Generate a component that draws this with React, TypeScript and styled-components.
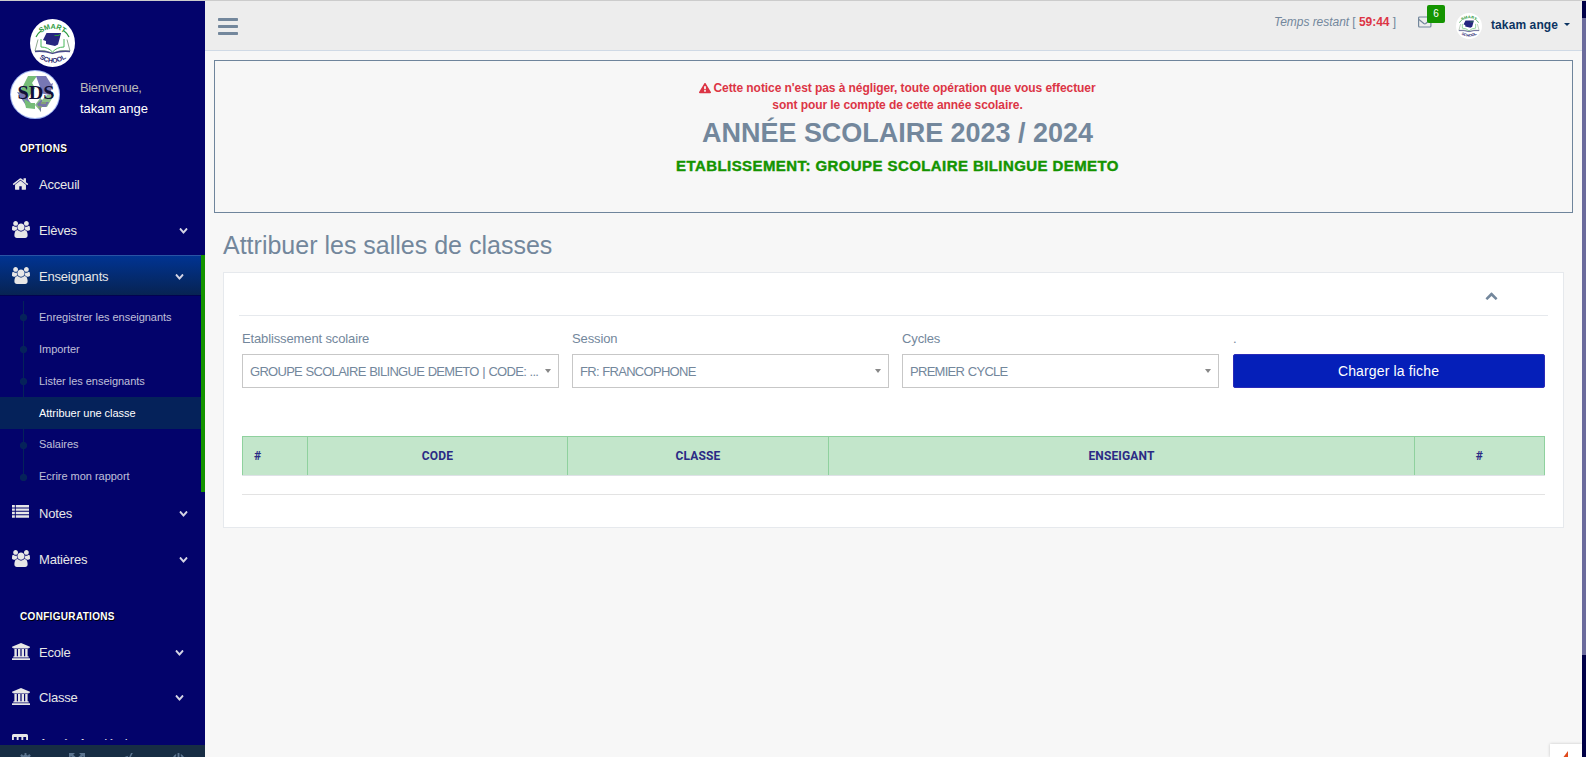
import React from "react";
import styled, { createGlobalStyle } from "styled-components";

const Global = createGlobalStyle`
  *, *::before, *::after { box-sizing: border-box; }
  body { margin: 0; background: #f7f7f7; overflow: hidden; }
  body, button { font-family: "Liberation Sans", Arial, sans-serif; }
`;

const PATHS = {
  home: ["0 0 1792 1792", "M1472 992v480q0 26-19 45t-45 19h-384v-384h-256v384h-384q-26 0-45-19t-19-45v-480q0-1 .5-3t.5-3l575-474 575 474q1 2 1 6zm223-69l-62 74q-8 9-21 11h-3q-13 0-21-7l-692-577-692 577q-12 8-24 7-13-2-21-11l-62-74q-8-10-7-23.5t11-21.5l719-599q32-26 76-26t76 26l244 204v-195q0-14 9-23t23-9h192q14 0 23 9t9 23v408l219 182q10 8 11 21.5t-7 23.5z"],
  users: ["-64 0 1920 1792", "M529 896q-162 5-265 128h-134q-82 0-138-40.5t-56-118.5q0-353 124-353 6 0 43.5 21t97.5 42.5 119 21.5q67 0 133-23-5 37-5 66 0 139 81 256zm1071 637q0 120-73 189.5t-194 69.5h-874q-121 0-194-69.5t-73-189.5q0-53 3.5-103.5t14-109 26.5-108.5 43-97.5 62-81 85.5-53.5 111.5-20q10 0 43 21.5t73 48 107 48 135 21.5 135-21.5 107-48 73-48 43-21.5q61 0 111.5 20t85.5 53.5 62 81 43 97.5 26.5 108.5 14 109 3.5 103.5zm-1024-1277q0 106-75 181t-181 75-181-75-75-181 75-181 181-75 181 75 75 181zm704 384q0 159-112.5 271.5t-271.5 112.5-271.5-112.5-112.5-271.5 112.5-271.5 271.5-112.5 271.5 112.5 112.5 271.5zm576 225q0 78-56 118.5t-138 40.5h-134q-103-123-265-128 81-117 81-256 0-29-5-66 66 23 133 23 59 0 119-21.5t97.5-42.5 43.5-21q124 0 124 353zm-128-609q0 106-75 181t-181 75-181-75-75-181 75-181 181-75 181 75 75 181z"],
  bank: ["0 0 1920 1792", "M960 0l960 384v128h-128q0 26-20.5 45t-48.5 19h-1526q-28 0-48.5-19t-20.5-45h-128v-128zm-704 640h256v768h128v-768h256v768h128v-768h256v768h128v-768h256v768h59q28 0 48.5 19t20.5 45v64h-1664v-64q0-26 20.5-45t48.5-19h59v-768zm1595 960q28 0 48.5 19t20.5 45v128h-1920v-128q0-26 20.5-45t48.5-19h1782z"],
  list: ["0 0 18 14", "M0 0h3v2.6H0zM4 0h14v2.6H4zM0 3.7h3v2.6H0zM4 3.7h14v2.6H4zM0 7.4h3V10H0zM4 7.4h14V10H4zM0 11.1h3v2.6H0zM4 11.1h14v2.6H4z"],
  table: ["0 0 17 16", "M1.5 0h14Q17 0 17 1.5v13q0 1.5-1.5 1.5h-14Q0 16 0 14.500v-13Q0 0 1.500 0zM2 3v3h3V3zm5 0v3h3V3zm5 0v3h3V3zM2 8v2h3V8zm5 0v2h3V8zm5 0v2h3V8z"],
  down: ["0 0 1792 1792", "M1683 808l-742 741q-19 19-45 19t-45-19l-742-741q-19-19-19-45.500t19-45.500l166-165q19-19 45-19t45 19l531 531 531-531q19-19 45-19t45 19l166 165q19 19 19 45.500t-19 45.500z"],
  up: ["0 0 1792 1792", "M1683 1331l-166 165q-19 19-45 19t-45-19l-531-531-531 531q-19 19-45 19t-45-19l-166-165q-19-19-19-45.500t19-45.500l742-741q19-19 45-19t45 19l742 741q19 19 19 45.500t-19 45.500z"],
  warning: ["0 0 1792 1792", "M1024 1375v-190q0-14-9.500-23.500t-22.500-9.500h-192q-13 0-22.500 9.500t-9.500 23.500v190q0 14 9.500 23.500t22.500 9.500h192q13 0 22.500-9.500t9.500-23.500zm-2-374l18-459q0-12-10-19-13-11-24-11h-220q-11 0-24 11-10 7-10 21l17 457q0 10 10 16.500t24 6.500h185q14 0 23.500-6.500t10.500-16.500zm-14-934l768 1408q35 63-2 126-17 29-46.500 46t-63.500 17h-1536q-34 0-63.500-17t-46.500-46q-37-63-2-126l768-1408q17-31 47-49t65-18 65 18 47 49z"],
  bars: ["0 0 20 17", "M.8 0h18.400q.8 0 .8.800v1.400q0 .8-.8.800H.8Q0 3 0 2.200V.8Q0 0 .8 0zM.8 7h18.400q.8 0 .8.800v1.400q0 .8-.8.800H.8Q0 10 0 9.200V7.800Q0 7 .8 7zM.8 14h18.400q.8 0 .8.800v1.400q0 .8-.8.800H.8Q0 17 0 16.200v-1.400q0-.8.8-.8z"],
  cog: ["0 0 14 14", "M6 0h2v2l1.500.6L11 1.200 12.800 3l-1.400 1.500L12 6h2v2h-2l-.6 1.500L12.800 11 11 12.800l-1.500-1.400L8 12v2H6v-2l-1.500-.6L3 12.800 1.200 11l1.400-1.500L2 8H0V6h2l.6-1.500L1.200 3 3 1.200l1.500 1.400L6 2zM7 4.500a2.500 2.500 0 100 5 2.500 2.500 0 000-5z"],
  full: ["0 0 16 14", "M0 0h6L4.200 1.700 7 4.300 5.300 6 2.100 3.200 0 5zM10 0h6v5l-2.100-1.800L10.700 6 9 4.300l2.800-2.600zM0 14V9l2.100 1.800L5.300 8 7 9.700l-2.800 2.600L6 14zM16 14h-6l1.800-1.700L9 9.700 10.700 8l3.200 2.800L16 9z"],
  eye: ["0 0 16 14", "M11.500 0h2L6 14H4.500zM0 8Q3 3.500 8.500 3L7.200 5Q5 6 6 9l-1 2Q1.500 10 0 8zM12.500 4Q15 5.500 16 8q-2.500 3-7 3.500l2.500-4.500z"],
  off: ["0 0 14 14", "M6 0h2v7H6zM4.500 1.200v2.300a4.500 4.500 0 105 0V1.200a6.500 6.500 0 11-5 0z"],
} as const;
type IconName = keyof typeof PATHS;

const Svg = styled.svg<{ $w: number; $h: number }>`
  display: block; flex: none; width: ${p => p.$w}px; height: ${p => p.$h}px; fill: currentColor;
`;
const Icon = ({ name, w, h }: { name: IconName; w: number; h: number }) => (
  <Svg $w={w} $h={h} viewBox={PATHS[name][0]} preserveAspectRatio="none" aria-hidden><path fillRule={name === "table" || name === "cog" ? "evenodd" : undefined} d={PATHS[name][1]} /></Svg>
);

const Page = styled.div`
  position: relative; display: flex; width: 1586px; height: 757px; overflow: hidden;
  border-top: 1px solid #ccc; background: #f7f7f7; color: #73879c; font-size: 13px;
`;
const Sidebar = styled.aside`
  display: flex; flex-direction: column; flex: none; width: 205px; height: 756px; background: #03036b; color: #e7e7e7;
`;
const Brand = styled.div`padding: 18px 0 0 30px; height: 68px;`;
const Profile = styled.div`display: flex; padding: 1px 0 0 10px; height: 66px;`;
const Welcome = styled.div`
  padding: 10px 0 0 20px; line-height: 16px; letter-spacing: -0.35px;
  span { display: block; color: #bab8b8; }
  strong { display: block; margin-top: 5px; font-weight: 400; color: #fff; letter-spacing: 0; }
`;
const SectionTitle = styled.h3<{ $top: number }>`
  margin: ${p => p.$top}px 0 0; padding-left: 20px; height: 16px; line-height: 16px;
  font-size: 10px; letter-spacing: 0.32px; color: #fff; text-shadow: 1px 1px #000;
`;
const Menu = styled.nav<{ $top: number; $gap: number }>`
  display: flex; flex-direction: column; gap: ${p => p.$gap}px; margin-top: ${p => p.$top}px;
`;
const MenuRow = styled.div<{ $active?: boolean; $end: number }>`
  display: flex; align-items: center; height: 40px; padding: 0 ${p => p.$end}px 0 12px; letter-spacing: -0.2px;
  background: ${p => (p.$active ? "linear-gradient(#003494, #072352)" : "none")};
  box-shadow: ${p => (p.$active ? "inset 0 1px 0 rgba(255,255,255,.16), 0 1px 0 rgba(0,0,0,.25)" : "none")};
`;
const Glyph = styled.span<{ $low?: boolean }>`width: 27px; height: ${p => (p.$low ? 15 : 17)}px;`;
const RowText = styled.span`flex: 1; padding-top: 2px; white-space: nowrap;`;
const Chevron = styled.span`padding-top: 1px; color: #d4d4e4;`;
const Group = styled.div`border-right: 4px solid #149400; height: 237px;`;
const SubMenu = styled.ul`list-style: none; margin: 6px 0 0; padding: 0;`;
const SubItem = styled.li<{ $on?: boolean; $last?: boolean; $raised?: boolean }>`
  display: flex; align-items: center; height: 32px; font-size: 11px; letter-spacing: -0.03px;
  color: ${p => (p.$on ? "#fff" : "rgba(255,255,255,.75)")};
  background: ${p => (p.$on ? "#05225a" : "none")};
  span { padding-bottom: ${p => (p.$raised ? "2px" : "0")}; }
  &::before {
    content: ""; flex: none; width: 39px; height: 32px;
    background:
      radial-gradient(circle at 23.500px 16.500px, #05225a 3.300px, transparent 3.900px),
      linear-gradient(#05225a, #05225a) 23px 0 / 1px ${p => (p.$last ? "17px" : "32px")} no-repeat;
  }
`;
const Clip = styled.div`height: 18px; overflow: hidden; margin-top: 6px;`;
const Footer = styled.div`
  display: grid; grid-template-columns: repeat(4, 51px); justify-items: center;
  margin-top: auto; height: 12px; padding-top: 8px; overflow: hidden; background: #172d44; color: #5a738e;
`;

const Main = styled.main`flex: none; width: 1377px;`;
const TopNav = styled.header`
  display: flex; height: 50px; padding-left: 13px; background: #ededed; border-bottom: 1px solid #d0dae6; color: #73879c;
`;
const Toggle = styled.div`padding-top: 17px; flex: 1;`;
const Timer = styled.div`
  padding-top: 13px; width: 144px; font-size: 12px; line-height: 16px; white-space: nowrap; letter-spacing: -0.04px;
  b { color: #dc3545; }
`;
const Mail = styled.div`position: relative; width: 38px; padding-top: 15px;`;
const Badge = styled.span`
  position: absolute; left: 9px; top: 4px; width: 18px; height: 18px; border-radius: 2px;
  background: #149400; color: #fff; font-size: 10px; line-height: 18px; text-align: center;
`;
const User = styled.div`
  display: flex; width: 126px; padding-top: 12px; font-size: 12px; font-weight: 700; color: #0c3462;
  span { padding: 5px 0 0 9px; letter-spacing: 0.1px; }
  &::after { content: ""; height: 0; margin: 10px 0 0 6px; border: 3px solid transparent; border-top-color: #0c3462; border-bottom: 0; }
`;
const Notice = styled.section`
  margin: 9px 9px 0 9px; height: 153px; border: 1px solid #6f859c; padding: 19px 0 0 8px; text-align: center;
`;
const Alert = styled.p`
  margin: 0; color: #dc3545; font-size: 12px; font-weight: 700; line-height: 17px; letter-spacing: -0.07px;
  span { display: flex; justify-content: center; align-items: center; gap: 2px; }
`;
const Year = styled.h1`margin: 3px 0 0; font-size: 27px; line-height: 32px; letter-spacing: -0.03px;`;
const School = styled.h2`
  margin: 9px 0 0; font-size: 14px; line-height: 16px; letter-spacing: 0.4px; color: #149400; -webkit-text-stroke: 0.4px #149400; transform: scaleX(1.07);
`;
const Title = styled.h3`margin: 18px 0 0 18px; font-size: 25px; line-height: 28px; font-weight: 400;`;
const Panel = styled.section`
  margin: 13px 18px 0; height: 256px; padding: 0 15px; background: #fff; border: 1px solid #e6e9ed;
`;
const PanelHead = styled.div`
  display: flex; justify-content: flex-end; height: 43px; padding: 16px 50px 0 0; border-bottom: 1px solid #e6e9ed;
`;
const Form = styled.div`
  display: grid; grid-template-columns: 317px 317px 317px 312px; column-gap: 13px; padding: 15px 3px 0;
`;
const Field = styled.label`display: block; letter-spacing: -0.13px; line-height: 16px; &:last-child { padding-left: 1px; width: 313px; }`;
const Select = styled.div`
  display: flex; align-items: center; justify-content: space-between; margin-top: 7px; height: 34px; padding: 1px 7px 0 7px;
  border: 1px solid #c7c7c7; letter-spacing: -0.71px; font-size: 13px; white-space: nowrap; word-spacing: .6px;
  &::after { content: ""; border: 3px solid transparent; border-top: 4px solid #888; border-bottom: 0; margin-bottom: 2px; }
`;
const Button = styled.button`
  display: block; width: 312px; height: 34px; margin-top: 7px; padding: 0 7px 0 6px; border: 1px solid #2a2ab8; border-radius: 2px;
  background: #051fb9; color: #fff; font-size: 14px; letter-spacing: 0.15px;
`;
const Table = styled.table`
  width: 1302px; margin: 48px 3px 0; border-collapse: collapse; table-layout: fixed;
`;
const Th = styled.th<{ $w: number; $left?: boolean }>`
  width: ${p => p.$w}px; height: 39px; padding: 0 11px; border: 1px solid #8fd19e; border-bottom-color: #dee2e6; background: #c3e6cb;
  color: #2b2b85; font: 700 12px/16px Roboto, sans-serif; letter-spacing: 0.15px; text-align: ${p => (p.$left ? "left" : "center")};
`;
const Rule = styled.div`margin: 18px 3px 0; border-top: 1px solid #e3e3e3;`;
const ScrollTrack = styled.div`flex: none; width: 4px; height: 756px; padding-top: 17px; background: #000048;`;
const ScrollThumb = styled.div`height: 637px; background: #6b6b9c;`;
const Widget = styled.div`
  position: absolute; right: 4px; bottom: 0; display: flex; justify-content: center; width: 32px; height: 13px;
  padding-top: 7px; overflow: hidden; background: #fff; box-shadow: 0 0 3px rgba(0,0,0,.2);
`;

const SmartLogo = ({ w, h, id }: { w: number; h: number; id: string }) => (
  <svg width={w} height={h} viewBox="0 0 45 48" preserveAspectRatio="none">
    <defs>
      <path id={id + "Top"} d="M8 16.500Q22.500 3 37 16.500" />
      <path id={id + "Bot"} d="M7 37.500Q22.500 50 38.500 37.500" />
    </defs>
    <ellipse cx="22.500" cy="24" rx="22.500" ry="24" fill="#fff" />
    <text fontSize="7.200" fontWeight="700" fill="#2c9a3e" textAnchor="middle"><textPath href={"#" + id + "Top"} startOffset="50%">SMART</textPath></text>
    <path d="M6 18Q8 14 11.500 11.500M39 18Q37 14 33.500 11.500" stroke="#2c9a3e" strokeWidth="1.200" fill="none" />
    <path d="M8 20.500L5 32q9-2 17.500 2 8.500-4 17.500-2l-3-11.500" stroke="#8fa98f" strokeWidth="1" fill="none" />
    <path d="M11 20v8q7 0 11.500 5Q27 28 34 28v-8" stroke="#49b85a" strokeWidth="1" fill="none" />
    <path d="M5 32.500q9-1 17.500 2 8.500-3 17.500-2" stroke="#4a4a8c" strokeWidth="1.300" fill="none" />
    <path d="M16.500 14H31l-1.500 6-1.500 5.500-3 1.500-9-2v-3l-3-1z" fill="#262680" />
    <path d="M24.500 16.500h4.500l.5-1.500" stroke="#2c9a3e" strokeWidth="1" fill="none" />
    <text fontSize="6.800" fontWeight="700" fill="#262670" textAnchor="middle"><textPath href={"#" + id + "Bot"} startOffset="50%">SCHOOL</textPath></text>
  </svg>
);
const SdsLogo = () => (
  <svg width="50" height="49" viewBox="0 0 50 49">
    <ellipse cx="25" cy="24.500" rx="25" ry="24.500" fill="#9fb4f0" />
    <ellipse cx="25" cy="24.500" rx="24" ry="23.600" fill="#fff" />
    <path d="M18 6h9l-5 7 3 5-7 10-10-4 5-8z" fill="#76bd78" />
    <path d="M26 6h10l5 8 2-1-3 12-11-2 2-3z" fill="#7777b4" />
    <path d="M7 22l11 2v5l4 6 3 3-8-1z" fill="#7777b4" />
    <path d="M14 29l7 4h4v6l-9-1z" fill="#76bd78" />
    <path d="M44 25l-7 12h-6v5l-6-7 6-8v4l6-6z" fill="#8cbf8a" />
    <path d="M27 34l5-5v3h7l-3 5h-5v5z" fill="#7777a8" />
    <path d="M31 33h5M28 37h4" stroke="#93c34b" />
    <text x="26" y="29" textAnchor="middle" textLength="37" lengthAdjust="spacingAndGlyphs" fontFamily="Liberation Serif, serif" fontWeight="700" fontSize="19" fill="#10103a">SDS</text>
  </svg>
);

const ICON_SIZE: Partial<Record<IconName, [number, number]>> = { home: [17, 16], list: [17, 13], table: [16, 16] };
const Entry = ({ icon, label, chevron = true, active, end = 17 }: { icon: IconName; label: string; chevron?: boolean; active?: boolean; end?: number }) => {
  const [w, h] = ICON_SIZE[icon] ?? [18, 17];
  return (
    <MenuRow $active={active} $end={end}>
      <Glyph $low={icon === "list" || icon === "home"}><Icon name={icon} w={w} h={h} /></Glyph>
      <RowText>{label}</RowText>
      {chevron && <Chevron><Icon name="down" w={9} h={10} /></Chevron>}
    </MenuRow>
  );
};

const SUB = ["Enregistrer les enseignants", "Importer", "Lister les enseignants", "Attribuer une classe", "Salaires", "Ecrire mon rapport"];
const FIELDS = [
  ["Etablissement scolaire", "GROUPE SCOLAIRE BILINGUE DEMETO | CODE: ..."],
  ["Session", "FR: FRANCOPHONE"],
  ["Cycles", "PREMIER CYCLE"],
];
const COLUMNS: [string, number][] = [["#", 65], ["CODE", 260], ["CLASSE", 261], ["ENSEIGANT", 586], ["#", 130]];

export default function App() {
  return (
    <Page>
      <Global />
      <Sidebar>
        <Brand><SmartLogo id="brand" w={45} h={48} /></Brand>
        <Profile>
          <SdsLogo />
          <Welcome><span>Bienvenue,</span><strong>takam ange</strong></Welcome>
        </Profile>
        <SectionTitle $top={6}>OPTIONS</SectionTitle>
        <Menu $top={6} $gap={6}>
          <Entry icon="home" label="Acceuil" chevron={false} />
          <Entry icon="users" label="Elèves" />
          <Group>
            <Entry icon="users" label="Enseignants" active />
            <SubMenu>
              {SUB.map((label, i) => (
                <SubItem key={label} $on={i === 3} $last={i === 5} $raised={i > 3}><span>{label}</span></SubItem>
              ))}
            </SubMenu>
          </Group>
        </Menu>
        <Menu $top={0} $gap={6}>
          <Entry icon="list" label="Notes" />
          <Entry icon="users" label="Matières" />
        </Menu>
        <SectionTitle $top={31}>CONFIGURATIONS</SectionTitle>
        <Menu $top={6} $gap={5}>
          <Entry icon="bank" label="Ecole" end={21} />
          <Entry icon="bank" label="Classe" end={21} />
        </Menu>
        <Clip><Entry icon="table" label="Année Académique" end={21} /></Clip>
        <Footer>
          <Icon name="cog" w={13} h={13} />
          <Icon name="full" w={16} h={14} />
          <Icon name="eye" w={14} h={13} />
          <Icon name="off" w={13} h={13} />
        </Footer>
      </Sidebar>
      <Main>
        <TopNav>
          <Toggle><Icon name="bars" w={20} h={17} /></Toggle>
          <Timer><i>Temps restant</i> [ <b>59:44</b> ]</Timer>
          <Mail>
            <svg width="14" height="12" viewBox="0 0 14 12" fill="none" stroke="#73879c" strokeWidth="1.200"><rect x=".6" y="1" width="12.300" height="10" rx="1" /><path d="M1 3.500l4.800 4q1 .7 2 0l4.800-4" /></svg>
            <Badge>6</Badge>
          </Mail>
          <User><SmartLogo id="user" w={26} h={26} /><span>takam ange</span></User>
        </TopNav>
        <Notice>
          <Alert>
            <span><Icon name="warning" w={12} h={11} />Cette notice n'est pas à négliger, toute opération que vous effectuer</span>
            sont pour le compte de cette année scolaire.
          </Alert>
          <Year>ANNÉE SCOLAIRE 2023 / 2024</Year>
          <School>ETABLISSEMENT: GROUPE SCOLAIRE BILINGUE DEMETO</School>
        </Notice>
        <Title>Attribuer les salles de classes</Title>
        <Panel>
          <PanelHead><Icon name="up" w={13} h={13} /></PanelHead>
          <Form>
            {FIELDS.map(([label, value]) => (
              <Field key={label}>{label}<Select>{value}</Select></Field>
            ))}
            <Field as="div">.<Button>Charger la fiche</Button></Field>
          </Form>
          <Table>
            <thead><tr>{COLUMNS.map(([name, w], i) => <Th key={i} $w={w} $left={i === 0}>{name}</Th>)}</tr></thead>
          </Table>
          <Rule />
        </Panel>
      </Main>
      <ScrollTrack><ScrollThumb /></ScrollTrack>
      <Widget><svg width="8" height="14" viewBox="0 0 8 14"><path d="M6 0v14H0V8Z" fill="#e04a1c" /></svg></Widget>
    </Page>
  );
}
